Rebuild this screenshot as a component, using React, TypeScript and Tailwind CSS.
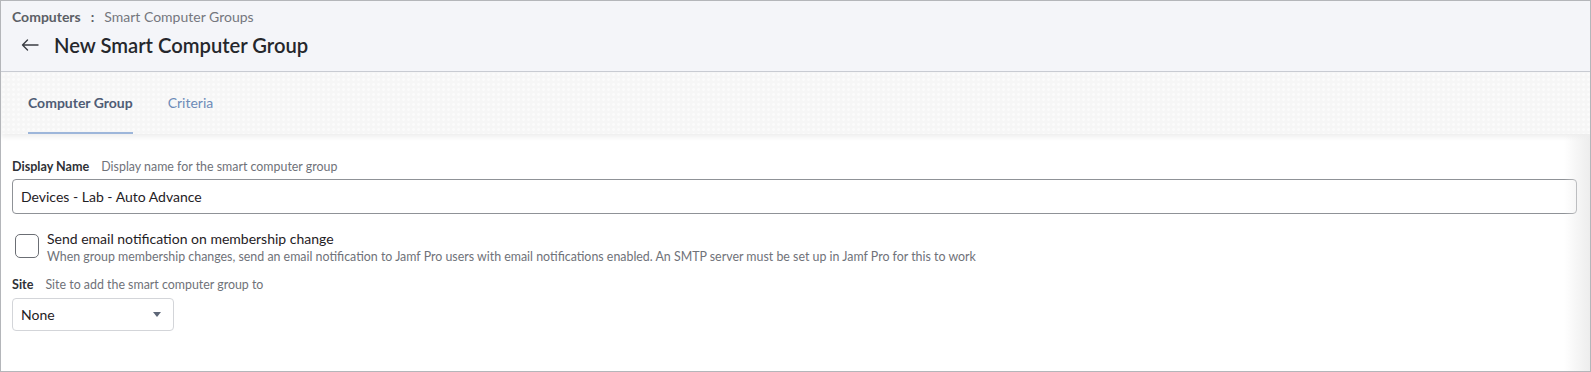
const font = { fontFamily: "Lato, 'Open Sans', sans-serif" };

function FieldLabel({ title, hint }: { title: string; hint: string }) {
  return (
    <div className="flex items-baseline gap-[12px] leading-4">
      <span className="text-[12.6px] font-bold text-[#2f3237]">{title}</span>
      <span className="text-[12.4px] text-[#6f7279]">{hint}</span>
    </div>
  );
}

function BackArrow() {
  return (
    <svg width="18" height="12" viewBox="0 0 18 12" fill="none" stroke="#3a3d43" strokeWidth="1.4" strokeLinecap="round" strokeLinejoin="round">
      <path d="M17 6H1.5M6.5 1 1.5 6l5 5" />
    </svg>
  );
}

export default function App() {
  return (
    <div
      className="relative h-[372px] w-[1591px] overflow-hidden border border-[#b4b6ba] bg-white"
      style={font}
    >
      <header className="h-[71px] border-b border-[#c9ccd3] bg-[#f4f5f9] px-[11px] pt-[6px]">
        <div className="flex items-center gap-[10px] text-[14px] leading-5">
          <span className="font-bold text-[#5c5f66]">Computers</span>
          <span className="font-bold text-[#5c5f66]">:</span>
          <span className="text-[#74777e]">Smart Computer Groups</span>
        </div>
        <div className="mt-[6px] flex items-center gap-[15px] pl-[9px]">
          <BackArrow />
          <h1 className="text-[20.2px] font-semibold leading-6 text-[#25272c]">
            New Smart Computer Group
          </h1>
        </div>
      </header>

      <nav className="flex h-[62px] items-end gap-[35px] bg-[#f6f6f6] bg-[radial-gradient(circle,#fbfbfb_1.2px,transparent_1.6px)] bg-size-[5px_5px] px-[27px] shadow-[0_3px_5px_rgba(0,0,0,0.07)]">
        <div className="flex h-full flex-col justify-end">
          <span className="pb-[19px] text-[14px] font-bold text-[#4f5c75]">Computer Group</span>
          <div className="h-[2px] bg-[#9db6da]" />
        </div>
        <div className="flex h-full flex-col justify-end">
          <span className="pb-[19px] text-[14px] text-[#6d8bb8]">Criteria</span>
          <div className="h-[2px]" />
        </div>
      </nav>

      <main className="px-[11px] pt-[25px]">
        <FieldLabel title="Display Name" hint="Display name for the smart computer group" />
        <div className="mt-[4px] flex h-[35px] w-[1565px] items-center rounded-[4px] border border-[#8f9297] px-[8px] text-[14px] text-[#1f2125]">
          Devices - Lab - Auto Advance
        </div>

        <div className="mt-[20px] flex gap-[8px] pl-[3px]">
          <div className="h-[24px] w-[24px] shrink-0 rounded-[5px] border border-[#6b6e74] bg-white" />
          <div className="-mt-[5px]">
            <div className="text-[14px] leading-5 text-[#1f2125]">
              Send email notification on membership change
            </div>
            <div className="text-[12.4px] leading-[15px] text-[#6f7279]">
              When group membership changes, send an email notification to Jamf Pro users with email notifications enabled. An SMTP server must be set up in Jamf Pro for this to work
            </div>
          </div>
        </div>

        <div className="mt-[13px]">
          <FieldLabel title="Site" hint="Site to add the smart computer group to" />
        </div>
        <div className="mt-[5px] flex h-[33px] w-[162px] items-center justify-between rounded-[4px] border border-[#d3d5d9] pl-[8px] pr-[12px] text-[14px] text-[#1f2125]">
          <span>None</span>
          <svg width="8" height="5" viewBox="0 0 8 5">
            <path d="M0 0h8L4 5z" fill="#5d6677" />
          </svg>
        </div>
      </main>

      <div className="pointer-events-none absolute right-0 top-[133px] bottom-0 w-[26px] bg-gradient-to-r from-transparent to-[#ededed]" />
    </div>
  );
}
